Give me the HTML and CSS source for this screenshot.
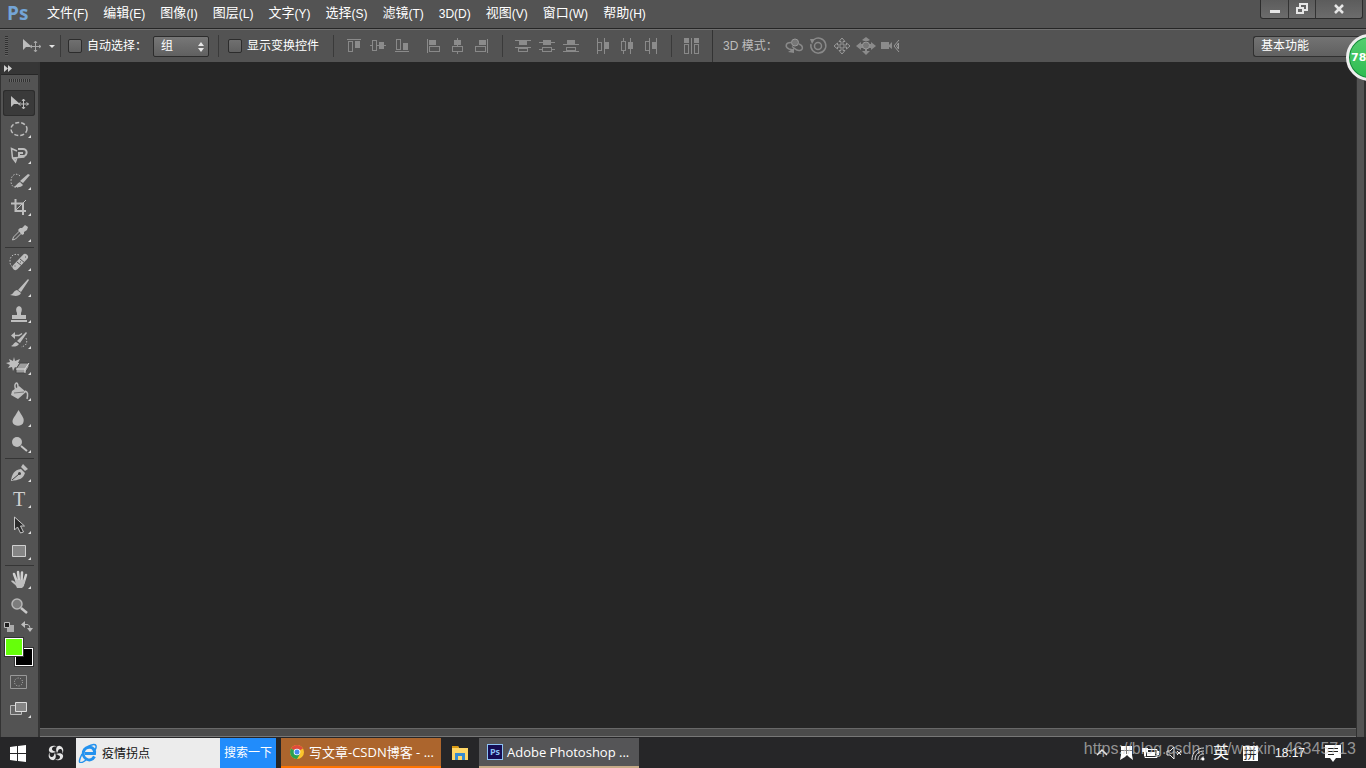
FILE: index.html
```html
<!DOCTYPE html>
<html lang="zh-CN">
<head>
<meta charset="utf-8">
<title>Adobe Photoshop</title>
<link rel="stylesheet" href="styles.css">
</head>
<body>
<div class="app">
  <header class="menubar">
    <span class="logo">Ps</span>
    <nav class="menus">
      <button>文件<span>(F)</span></button>
      <button>编辑<span>(E)</span></button>
      <button>图像<span>(I)</span></button>
      <button>图层<span>(L)</span></button>
      <button>文字<span>(Y)</span></button>
      <button>选择<span>(S)</span></button>
      <button>滤镜<span>(T)</span></button>
      <button><span>3D(D)</span></button>
      <button>视图<span>(V)</span></button>
      <button>窗口<span>(W)</span></button>
      <button>帮助<span>(H)</span></button>
    </nav>
    <div class="window-buttons">
      <button aria-label="最小化"><svg width="27" height="18"><path d="M9 10h10v3H9z" fill="#e6e6e6"/></svg></button>
      <button aria-label="还原"><svg width="26" height="18" fill="none" stroke="#e6e6e6" stroke-width="2"><path d="M11 7V4h7v6h-4M8 8h6v5H8z"/></svg></button>
      <button class="close" aria-label="关闭"><svg width="46" height="18"><path d="M19 5l8 8M27 5l-8 8" stroke="#e6e6e6" stroke-width="2.500"/></svg></button>
    </div>
  </header>

  <section class="options">
    <span class="grip"></span>
    <button class="current-tool" aria-label="移动工具"><svg width="36" height="24"><path d="M5 5v11l3-3 6 0z" fill="#bdbdbd"/><path d="M17.500 7v11M12 12.500h11M16 9l1.500-2L19 9M16 16l1.500 2 1.500-2M14 11l-2 1.500 2 1.500M21 11l2 1.500-2 1.500" fill="none" stroke="#a8a8a8"/><path d="M31 11h6l-3 3z" fill="#e4e4e4"/></svg></button>
    <span class="rule"></span>
    <label class="check auto"><input type="checkbox">自动选择：</label>
    <span class="select-wrap"><select aria-label="自动选择"><option>组</option></select><svg width="8" height="10"><path d="M1 4l3-4 3 4zM1 6l3 4 3-4z" fill="#e8e8e8"/></svg></span>
    <span class="rule"></span>
    <label class="check"><input type="checkbox">显示变换控件</label>
    <span class="rule after-check"></span>
    <div class="icons">
      <button aria-label="顶对齐"><svg viewBox="0 0 24 24"><path class="o" d="M6.500 7.500h4v10h-4z"/><path class="f" d="M5 5h14v1H5zM13 7h5v7h-5z"/></svg></button>
      <button aria-label="垂直居中对齐"><svg viewBox="0 0 24 24"><path class="o" d="M6.500 6.500h4v10h-4zM4 11.500h2M11 11.500h2M18 11.500h2"/><path class="f" d="M13 8h5v7h-5z"/></svg></button>
      <button aria-label="底对齐"><svg viewBox="0 0 24 24"><path class="o" d="M6.500 5.500h4v10h-4z"/><path class="f" d="M5 17h14v1H5zM13 9h5v7h-5z"/></svg></button>
    </div>
    <div class="icons">
      <button aria-label="左对齐"><svg viewBox="0 0 24 24"><path class="o" d="M7.500 12.500h10v5h-10z"/><path class="f" d="M5 5h1v14H5zM7 6h7v5H7z"/></svg></button>
      <button aria-label="水平居中对齐"><svg viewBox="0 0 24 24"><path class="o" d="M6.500 12.500h10v5h-10zM11.500 4v2M11.500 10v3M11.500 18v2"/><path class="f" d="M8 6h7v5H8z"/></svg></button>
      <button aria-label="右对齐"><svg viewBox="0 0 24 24"><path class="o" d="M5.500 12.500h10v5h-10z"/><path class="f" d="M17 5h1v14h-1zM9 6h7v5H9z"/></svg></button>
    </div>
    <span class="rule"></span>
    <div class="icons dist">
      <button aria-label="按顶分布"><svg viewBox="0 0 24 24"><path class="o" d="M7.500 14.500h9v3h-9z"/><path class="f" d="M4 6h16v1H4zM4 13h16v1H4zM8 7h8v4H8z"/></svg></button>
      <button aria-label="垂直居中分布"><svg viewBox="0 0 24 24"><path class="o" d="M7.500 13.500h9v4h-9zM4 15.500h3M17 15.500h3"/><path class="f" d="M4 8h16v1H4zM8 6h8v5H8z"/></svg></button>
      <button aria-label="按底分布"><svg viewBox="0 0 24 24"><path class="o" d="M7.500 13.500h9v3h-9z"/><path class="f" d="M4 10h16v1H4zM4 17h16v1H4zM8 6h8v4H8z"/></svg></button>
    </div>
    <div class="icons">
      <button aria-label="按左分布"><svg viewBox="0 0 24 24"><path class="o" d="M6.500 8.500h4v8h-4z"/><path class="f" d="M6 4h1v16H6zM13 4h1v16h-1zM14 8h4v7h-4z"/></svg></button>
      <button aria-label="水平居中分布"><svg viewBox="0 0 24 24"><path class="o" d="M6.500 7.500h4v9h-4zM8.500 4v3M8.500 17v3"/><path class="f" d="M15 4h1v16h-1zM13 8h5v7h-5z"/></svg></button>
      <button aria-label="按右分布"><svg viewBox="0 0 24 24"><path class="o" d="M6.500 7.500h4v9h-4z"/><path class="f" d="M10 4h1v16h-1zM17 4h1v16h-1zM13 8h4v7h-4z"/></svg></button>
    </div>
    <span class="rule"></span>
    <div class="icons">
      <button aria-label="自动对齐图层"><svg viewBox="0 0 24 24"><path class="o" d="M4.500 10.500h4v9h-4zM14.500 10.500h4v9h-4z"/><path class="f" d="M4 4h5v5H4zM14 4h5v5h-5zM11 4h1v16h-1z"/></svg></button>
    </div>
    <span class="rule full"></span>
    <span class="mode">3D 模式：</span>
    <div class="icons three-d">
      <button aria-label="旋转 3D 对象"><svg viewBox="0 0 24 24"><path class="s" d="M9 8.500c-6 0-6 5-2 6.500l4 1M17 10c5 2 4 7 0 6.500-3 0-4-2-7-4"/><path class="f" d="M6 18l6-4v5z"/><circle cx="13" cy="8.500" r="3.500" class="ball"/></svg></button>
      <button aria-label="滚动 3D 对象"><svg viewBox="0 0 24 24"><circle cx="12" cy="12" r="3.500" class="s"/><path class="s" d="M8 5.500A7.500 7.500 0 1 1 5 10"/><path class="f" d="M4 5h5l-3 5z"/></svg></button>
      <button aria-label="拖动 3D 对象"><svg viewBox="0 0 24 24"><path class="thin" d="M12 4l3 3.500h-2V11h3.500V9l3.500 3-3.500 3v-2H13v3.500h2L12 20l-3-3.500h2V13H7.500v2L4 12l3.500-3v2H11V7.500H9z"/></svg></button>
      <button aria-label="滑动 3D 对象"><svg viewBox="0 0 24 24"><path class="f" d="M8 6l4-3 4 3-2 1h-4zM7 8v2h2v4H7v2l-5-4zM17 8v2h-2v4h2v2l5-4zM8 17h3v-2h2v2h3l-4 4z"/><circle cx="12" cy="11.500" r="3.500" class="ball"/></svg></button>
      <button aria-label="缩放 3D 对象"><svg viewBox="0 0 24 24"><path class="f" d="M3 8h8v7H3zM10 12l4-4v7z"/><path class="thin" d="M21 6l-5 6 5 6M20.500 9l-2 3 2 3z"/></svg></button>
    </div>
    <button class="workspace-name">基本功能</button>
  </section>

  <main class="workspace">
    <aside class="toolbox">
      <button class="collapse" aria-label="展开面板"><svg width="10" height="8"><path d="M1 0l4 3.500L1 7zM5 0l4 3.500L5 7z" fill="#d0d0d0"/></svg></button>
      <span class="tool-grip"></span>
      <div class="tools">
        <button class="active" aria-label="移动"><svg viewBox="0 0 32 26"><path class="g" d="M8 6v11l3-3h6z"/><path class="l" d="M20.500 9v10M15.500 14h10M19 11l1.500-2 1.500 2M19 17l1.500 2 1.500-2M17.500 12.500l-2 1.500 2 1.500M23.500 12.500l2 1.500-2 1.500"/></svg></button>
        <button class="more" aria-label="选框"><svg viewBox="0 0 32 26"><ellipse class="l" cx="16" cy="13" rx="8" ry="6.500" stroke-width="1.500" stroke-dasharray="4 2"/></svg></button>
        <button class="more" aria-label="套索"><svg viewBox="0 0 32 26"><path class="l" d="M14 9L8.500 6.500 9.500 16l3 4 1-3-4-1 12-1" stroke-width="1.500"/><path class="l" d="M15 7h4c6-1 6 7 1 7h-4v-3h4" stroke-width="2"/></svg></button>
        <button class="more" aria-label="快速选择"><svg viewBox="0 0 32 26"><path class="l" d="M17 8c-4-4-9-1-9 5s4 7 7 6" stroke-dasharray="1.500 1.500"/><path class="g" d="M25 6l2 1-7 8-3-2zM17 14l3 3c-2 3-6 2-9 2 3-2 3-4 6-5z"/></svg></button>
        <button class="more" aria-label="裁剪"><svg viewBox="0 0 32 26"><path class="l" d="M12.500 5v12H23M8 9.500h12V21" stroke-width="2"/><path class="l" d="M13 16L23 6"/></svg></button>
        <button class="more" aria-label="吸管"><svg viewBox="0 0 32 26"><path class="l" d="M9.500 20l1-3 7-7 2 2-7 7z"/><path class="g" d="M17 8l2 0 3-3 3 2-1 3-3 2v2l-2 1-4-5z"/></svg></button>
        <hr>
        <button class="more" aria-label="修复画笔"><svg viewBox="0 0 32 26"><path class="l" d="M16 6c-5-2-9 1-9 6 0 4 1 5 3 6" stroke-dasharray="1.500 1.500"/><path d="M12.500 18L22 8" stroke="#bdbdbd" stroke-width="6" stroke-linecap="round"/><path d="M14 13l5 4M17 10l5 4M11.500 17h1M22 8h1M17 13h1" stroke="#555"/></svg></button>
        <button class="more" aria-label="画笔"><svg viewBox="0 0 32 26"><path class="g" d="M25 4l1 1-8 12-3-2zM14 15l4 3c-2 4-7 3-11 2 4-1 3-4 7-5z"/></svg></button>
        <button class="more" aria-label="仿制图章"><svg viewBox="0 0 32 26"><path class="g" d="M14 12c-4-9 8-9 4 0v2h5v4H9v-4h5zM8 19h16v2H8z"/></svg></button>
        <button class="more" aria-label="历史记录画笔"><svg viewBox="0 0 32 26"><path class="l" d="M10 8.500h6l3-2" stroke-width="1.500"/><path class="l" d="M23 11c2 5 0 8-5 9" stroke-dasharray="1.500 1.500"/><path class="g" d="M8 8.500L12 5v7zM23 5l1 1-7 10-3-2zM13 15l3 2c-2 3-6 3-8 2 3-1 2-3 5-4z"/></svg></button>
        <button class="more" aria-label="橡皮擦"><svg viewBox="0 0 32 26"><path class="g" d="M6 6l4 2 1-4 1 4 5-2-2 4h4l-4 2 1 4-4-2-2 4-1-4-4 1 2-3-4-2 4-1z"/><path d="M17 10h9v4l-4 6h-9v-4z" fill="#9d9d9d" stroke="#444"/><path d="M13 16h9l4-6M22 16v4" stroke="#ddd" fill="none"/></svg></button>
        <button class="more" aria-label="油漆桶"><svg viewBox="0 0 32 26"><path class="g" d="M9 12l7-5 7 6-8 7-7-4z"/><path class="l" d="M13 11c-3-7 2-10 2-3M22 12c3 1 3 3 2 8" stroke-width="1.500"/><path d="M11 14l10-1" stroke="#777"/></svg></button>
        <button class="more" aria-label="模糊"><svg viewBox="0 0 32 26"><path class="g" d="M15.500 5c4 7 6 8 5 12-1 5-10 5-11 0 0-4 3-6 6-12z"/></svg></button>
        <button class="more" aria-label="减淡"><svg viewBox="0 0 32 26"><circle class="g" cx="14" cy="11" r="5"/><path d="M18 15l6 5" stroke="#c6c6c6" stroke-width="2"/></svg></button>
        <hr>
        <button class="more" aria-label="钢笔"><svg viewBox="0 0 32 26"><path class="g" d="M8 21c1-7 3-11 10-12l4 4c-2 6-6 7-14 8zM18 7l2-3 5 5-3 2z"/><path d="M9 20l7-6" stroke="#444"/><circle cx="16.500" cy="13.500" r="1.500" fill="#444"/></svg></button>
        <button class="more type-tool" aria-label="横排文字">T</button>
        <button class="more" aria-label="路径选择"><svg viewBox="0 0 32 26"><path d="M11.500 5v13l3-3 3 6 3-1-3-6h4z" fill="#2a2a2a" stroke="#c8c8c8"/></svg></button>
        <button class="more" aria-label="矩形"><svg viewBox="0 0 32 26"><path d="M9.500 7.500h13v11h-13z" fill="#858585" stroke="#d0d0d0"/></svg></button>
        <hr>
        <button class="more" aria-label="抓手"><svg viewBox="0 0 32 26"><path d="M11 7l3 8M15 5l1 9M19 5.500l-.5 9M23 8l-2.500 8" stroke="#cfcfcf" stroke-width="2.500" stroke-linecap="round"/><path class="g" d="M12 13h10l-1 6-2 2h-5c-1-4-4-4-6-7 2-1 3 0 5 2z"/></svg></button>
        <button aria-label="缩放"><svg viewBox="0 0 32 26"><circle cx="14" cy="11" r="5" fill="#7d7d7d" stroke="#b7b7b7" stroke-width="1.500"/><path d="M18 15l6 5" stroke="#c8c8c8" stroke-width="2.500"/></svg></button>
      </div>
      <div class="swatch-tools">
        <button aria-label="默认颜色"><svg width="12" height="12"><path d="M4 4h7v7H4z" fill="#aaa"/><path d="M1.500 1.500h5v5h-5z" fill="#202020" stroke="#bbb"/></svg></button>
        <button aria-label="切换颜色"><svg width="12" height="12"><path d="M3 3.500h3q3 0 3 5" stroke="#bdbdbd" fill="none"/><path d="M0 3.500L4 0v7zM6 7h6l-3 4z" fill="#bdbdbd"/></svg></button>
      </div>
      <div class="swatches"><button class="background" aria-label="背景色"></button><button class="foreground" aria-label="前景色"></button></div>
      <button class="mask" aria-label="快速蒙版"><svg width="18" height="14"><path d="M.5 .5h16v13H.5z" fill="none" stroke="#999"/><circle cx="8.500" cy="7" r="4" fill="none" stroke="#bbb" stroke-dasharray="1 1.500"/></svg></button>
      <button class="screen more" aria-label="屏幕模式"><svg viewBox="0 0 32 26"><path d="M7.500 9.500h11v9h-11z" fill="#666" stroke="#bbb"/><path d="M12.500 6.500h11v9h-11z" fill="#858585" stroke="#ddd"/></svg></button>
    </aside>
    <div class="document">
      <div class="canvas"></div>
      <div class="dock-bottom"></div>
    </div>
    <div class="dock-right"></div>
  </main>

  <footer class="taskbar">
    <button class="start" aria-label="开始"><svg width="36" height="30"><path d="M10 9l7-1v7h-7zM18 8l8-1v8h-8zM10 16h7v7l-7-1zM18 16h8v8l-8-1z" fill="#fff"/></svg></button>
    <button class="fan" aria-label="搜索助手"><svg width="40" height="30" viewBox="-20 -15 40 30"><g fill="#e6e6e6"><path id="blade" d="M0-1C-4 1-8-1-7-4c1-4 6-4 8-2-3-1-5 0-5 2s3 2 4 3z"/><use href="#blade" transform="rotate(90)"/><use href="#blade" transform="rotate(180)"/><use href="#blade" transform="rotate(270)"/></g></svg></button>
    <form class="search">
      <svg width="20" height="20" viewBox="0 0 20 20"><path d="M16.500 13.500c-4 7-13 2-11-5 2-6 12-6 11 2H7" fill="none" stroke="#2492ee" stroke-width="3"/><path d="M4 11C-2 23 4 20 8 17M9 4c8-5 11-2 8 3" fill="none" stroke="#2492ee" stroke-width="1.500"/></svg>
      <input type="text" value="疫情拐点" aria-label="搜索">
      <button type="button">搜索一下</button>
    </form>
    <button class="task chrome"><svg width="14" height="14" viewBox="-7 -7 14 14"><circle r="7" fill="#fbc52c"/><path d="M0 0L-6-3.500A7 7 0 0 1 6-3.500z" fill="#df4b3c"/><path d="M0 0L-6-3.500A7 7 0 0 0 0 7l3-5z" fill="#2aa153"/><circle r="3.300" fill="#fff"/><circle r="2.500" fill="#458bf0"/></svg><span>写文章-CSDN博客 - ...</span></button>
    <button class="folder" aria-label="文件资源管理器"><svg width="16" height="14"><path d="M0 0h6l1 2h9v12H0z" fill="#ffd767"/><path d="M0 0h6l1 2H0z" fill="#d99a13"/><path d="M3 14V7h10v7h-3v-4H6v4z" fill="#378bd0"/></svg></button>
    <button class="task photoshop"><span class="ps-icon">Ps</span><span>Adobe Photoshop ...</span></button>
    <div class="tray">
      <button class="t-caret" aria-label="显示隐藏的图标"><svg viewBox="0 0 20 20"><path d="M5 12l5-5 5 5" stroke="#eee" fill="none" stroke-width="1.500"/></svg></button>
      <button class="t-flag" aria-label="工具"><svg viewBox="0 0 20 20"><path d="M5 3h11v9l1 5-4-3-2-2-2 2-5 3 1-5z" fill="#fff"/><path d="M10.500 3v8M5 7.500h11" stroke="#777"/></svg></button>
      <button class="t-battery" aria-label="电池"><svg viewBox="0 0 20 20"><path d="M5 6.500h12v8H5z" stroke="#fff" fill="none"/><path d="M7 9h8v4H7zM17 8h2v4h-2zM2 5h6v4H6v4H4V9H2z" fill="#fff"/></svg></button>
      <button class="t-sound" aria-label="静音"><svg viewBox="0 0 20 20"><path d="M3 8h3l4-4v12l-4-4H3zM13 8l4 4M17 8l-4 4" stroke="#eee" fill="none"/></svg></button>
      <button class="t-wifi" aria-label="无线网络"><svg viewBox="0 0 20 20"><path d="M4 17C4 9 9 5 16 5M7 17c0-6 4-9 9-9M10 17c0-4 2-6 6-6M13 17c0-2 1-3 3-3" stroke="#ddd" fill="none"/><circle cx="15" cy="16" r="1.500" fill="#fff"/></svg></button>
      <button class="t-lang">英</button>
      <button class="t-ime"><span>拼</span></button>
      <time>18:17</time>
      <button class="t-note" aria-label="通知"><svg viewBox="0 0 20 20"><path d="M2 2h16v13h-5l-3 4-3-4H2z" fill="#fff"/><path d="M5 5.500h10M5 8.500h10M5 11.500h6" stroke="#222"/></svg></button>
    </div>
  </footer>
  <div class="speed-badge">78</div>
  <div class="watermark">https://blog.csdn.net/weixin_46345713</div>
</div>
</body>
</html>
```
FILE: styles.css
```css
* { box-sizing: border-box; }
body { margin: 0; background: #262626; font: 12px/16px "Liberation Sans", "Noto Sans CJK SC", sans-serif; color: #fff; }
button { margin: 0; padding: 0; border: 0; background: none; color: inherit; font: inherit; white-space: nowrap; }
svg { display: block; }
.app { position: relative; display: flex; flex-direction: column; height: 100vh; overflow: hidden; }

.menubar { flex: none; display: flex; align-items: flex-start; height: 29px; padding: 0 3px 0 7px; background: #535353; border-bottom: 1px solid #262626; }
.logo { width: 40px; font: bold 19px/27px "Open Sans", sans-serif; color: #74a5d7; }
.menus { display: flex; gap: 15px; font-size: 13px; line-height: 26px; }
.menus button { display: flex; }
.menus span { font-size: 12px; line-height: 28px; }
.window-buttons { display: flex; margin-left: auto; height: 19px; border: 1px solid #2c2c2c; border-top: 0; border-radius: 0 0 3px 3px; background: linear-gradient(#5c5c5c, #6c6c6c); }
.window-buttons button + button { border-left: 1px solid #333; }
.close { width: 47px; }

.options { flex: none; display: flex; align-items: center; height: 33px; border-top: 1px solid #707070; background: #535353; }
.grip { width: 3px; height: 20px; margin-left: 5px; background: repeating-linear-gradient(#303030 0 1px, #606060 1px 2px); }
.current-tool { width: 36px; margin: 0 6px 0 10px; }
.current-tool svg { overflow: visible; }
.rule { flex: none; width: 1px; height: 22px; background: #3a3a3a; }
.check { display: flex; align-items: center; margin-left: 7px; white-space: nowrap; }
.check input { appearance: none; width: 14px; height: 14px; margin: 0 5px 0 0; border: 1px solid #2c2c2c; border-radius: 2px; background: linear-gradient(#707070, #606060); }
.auto { width: 85px; }
.select-wrap { position: relative; margin: 0 9px 0 0; }
.select-wrap select { display: block; appearance: none; width: 56px; height: 21px; padding: 0 7px; border: 1px solid #2c2c2c; border-radius: 2px; background: linear-gradient(#777, #606060); color: #fff; font: inherit; }
.select-wrap svg { position: absolute; right: 4px; top: 6px; pointer-events: none; }
.select-wrap + .rule + .check { margin-left: 9px; }
.after-check { margin-left: 14px; }
.icons { display: flex; margin-left: 8px; }
.icons button { width: 24px; height: 24px; }
.icons + .rule { margin-left: 8px; }
.icons .o { fill: none; stroke: #898989; shape-rendering: crispEdges; }
.icons .f { fill: #8b8b8b; }
.icons .s { fill: none; stroke: #898989; stroke-width: 1.5; }
.icons .thin { fill: none; stroke: #999; }
.icons .ball { fill: #777; stroke: #999; }
.rule.full { height: 32px; background: #333; }
.mode { width: 61px; margin-left: 10px; color: #bdbdbd; }
.icons.three-d { margin-left: -2px; }
.workspace-name { width: 113px; height: 21px; margin-left: auto; padding-left: 7px; border: 1px solid #303030; border-right: 0; border-radius: 3px 0 0 3px; background: linear-gradient(#737373, #606060); text-align: left; }

.workspace { flex: 1; display: flex; min-height: 0; }
.toolbox { flex: none; width: 40px; background: #535353; border-left: 1px solid #333; border-right: 2px solid #353535; display: flex; flex-direction: column; }
.collapse { height: 13px; padding: 3px 2px; background: #363636; border-bottom: 1px solid #272727; }
.tool-grip { height: 3px; margin: 4px 8px 8px; background: repeating-linear-gradient(90deg, #303030 0 1px, #666 1px 2px); }
.tools { display: flex; flex-direction: column; }
.tools button, .screen { position: relative; width: 32px; height: 26px; margin-left: 2px; }
.tools svg, .screen svg { width: 32px; height: 26px; }
.tools .active { border-radius: 3px; background: #3a3a3a; box-shadow: inset 0 0 0 1px #2c2c2c; }
.tools .g { fill: #bebebe; }
.tools .l { fill: none; stroke: #bdbdbd; }
.more::after { content: ""; position: absolute; right: 4px; bottom: 4px; border-left: 3px solid transparent; border-bottom: 3px solid #dedede; }
.tools hr { width: 29px; height: 1px; margin: 1px 0 1px 4px; border: 0; background: #353535; }
.tools .type-tool { font: 20px/26px "Liberation Serif", serif; color: #d0d0d0; }
.swatch-tools { display: flex; gap: 6px; padding: 2px 2px 5px; }
.swatches { position: relative; height: 30px; margin-left: 4px; }
.swatches button { position: absolute; width: 18px; height: 18px; border: 1px solid #fff; box-shadow: 0 0 0 1px #333; }
.swatches .foreground { left: 0; top: 0; background: #66ff0a; }
.swatches .background { left: 10px; top: 10px; background: #000; }
.mask { margin: 7px 0 7px 9px; }
.document { flex: 1; min-width: 0; display: flex; flex-direction: column; }
.canvas { flex: 1; background: #262626; }
.dock-bottom { height: 9px; border-top: 1px solid #686868; border-bottom: 1px solid #777; background: #4b4b4b; }
.dock-right { width: 10px; border: solid #303030; border-width: 0 2px 0 1px; background: #535353; }

.taskbar { flex: none; display: flex; height: 31px; padding-top: 1px; background: #262628; }
.search { display: flex; align-items: center; width: 200px; padding-left: 2px; background: #ececec; }
.search input { width: 122px; height: 30px; padding: 0 4px 2px; border: 0; background: transparent; font: inherit; color: #111; outline: 0; }
.search button { width: 56px; height: 30px; background: #218cfb; }
.task { display: flex; align-items: center; width: 160px; font: 13px/28px "Open Sans", "Noto Sans CJK SC", sans-serif; }
.chrome { gap: 5px; margin-left: 5px; padding-left: 9px; border-bottom: 2px solid #ff7400; background: #ac652d; }
.folder { width: 38px; padding-left: 11px; }
.photoshop { gap: 4px; padding-left: 8px; border-bottom: 2px solid #c6ab88; background: #555557; }
.ps-icon { width: 16px; height: 16px; border: 1px solid #8cc3f5; background: #150d54; color: #8cc3f5; font: bold 9px/13px "Open Sans", sans-serif; text-align: center; }
.tray { display: flex; align-items: center; margin-left: auto; padding-right: 23px; }
.tray svg { width: 20px; height: 20px; }
.t-flag, .t-battery, .t-sound, .t-wifi { margin-left: 4px; }
.t-lang { width: 20px; margin-left: 3px; font-size: 16px; }
.t-ime { width: 20px; margin-left: 9px; }
.t-ime span { display: block; width: 15px; margin: auto; background: #fff; color: #222; font-size: 13px; line-height: 15px; }
.tray time { width: 36px; margin-left: 15px; font-size: 12px; }
.t-note { margin-left: 12px; }

.speed-badge { position: absolute; right: -27px; top: 34px; width: 47px; height: 47px; padding-left: 2px; border: 3px solid #eee; border-radius: 50%; background: linear-gradient(#55ce70, #2dbb50); box-shadow: inset 0 0 0 1px #16853c; font: bold 11px/41px "DejaVu Sans", sans-serif; }
.watermark { position: absolute; right: 10px; bottom: 9px; color: rgba(210, 210, 210, .65); font: 16px/20px "Liberation Sans", sans-serif; pointer-events: none; }
```
